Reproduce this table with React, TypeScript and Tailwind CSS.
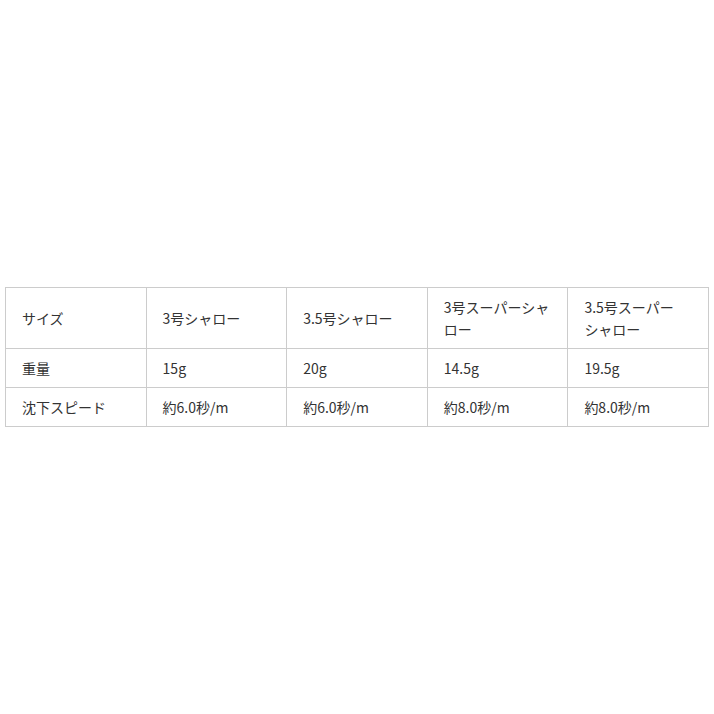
import type { ReactNode } from 'react';

const headers: ReactNode[] = [
  'サイズ',
  '3号シャロー',
  '3.5号シャロー',
  '3号スーパーシャロー',
  <>
    3.5号スーパー<span className="whitespace-nowrap">シャロー</span>
  </>,
];

const rows = [
  ['重量', '15g', '20g', '14.5g', '19.5g'],
  ['沈下スピード', '約6.0秒/m', '約6.0秒/m', '約8.0秒/m', '約8.0秒/m'],
];

export default function App() {
  return (
    <div
      lang="ja"
      className="flex h-[714px] w-[714px] items-center bg-white px-[5px] text-[#333] text-[14px] leading-[22px]"
      style={{ fontFamily: '"Noto Sans CJK JP", "Noto Sans", sans-serif' }}
    >
      <table className="w-[704px] table-fixed border-collapse border border-[#cccccc]">
        <tbody>
          <tr>
            {headers.map((h, i) => (
              <td key={i} className="h-[61px] border border-[#cccccc] px-4 py-2 align-middle font-normal">
                {h}
              </td>
            ))}
          </tr>
          {rows.map((row) => (
            <tr key={row[0]}>
              {row.map((cell, i) => (
                <td key={i} className="border border-[#cccccc] px-4 py-2 align-middle">
                  {cell}
                </td>
              ))}
            </tr>
          ))}
        </tbody>
      </table>
    </div>
  );
}
